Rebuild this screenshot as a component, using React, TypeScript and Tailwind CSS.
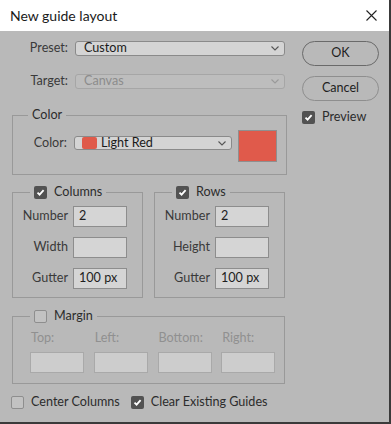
import React from "react";

const FONT = { fontFamily: 'Lato, "Noto Sans", sans-serif' };

function Check({ checked }: { checked: boolean }) {
  return checked ? (
    <span className="flex h-[13px] w-[13px] shrink-0 items-center justify-center rounded-[2px] bg-[#525252]">
      <svg width="9" height="9" viewBox="0 0 9 9">
        <path d="M1.5 4.6 L3.6 6.7 L7.6 2.2" fill="none" stroke="#ffffff" strokeWidth="1.8" />
      </svg>
    </span>
  ) : (
    <span className="block h-[13px] w-[13px] shrink-0 rounded-[2px] border border-[#8e8e8e] bg-[#c2c2c2]" />
  );
}

function Chevron({ color = "#555" }: { color?: string }) {
  return (
    <svg width="8" height="5" viewBox="0 0 8 5" className="shrink-0">
      <path d="M0.5 0.5 L4 4 L7.5 0.5" fill="none" stroke={color} strokeWidth="1.1" />
    </svg>
  );
}

function Input({ value, disabled }: { value?: string; disabled?: boolean }) {
  return (
    <div
      className={
        "flex h-[21px] w-[54px] items-center border px-[5px] text-[#1e1e1e] " +
        (disabled ? "border-[#a9a9a9] bg-[#cdcdcd]" : "border-[#8d8d8d] bg-[#d5d5d5]")
      }
    >
      {value}
    </div>
  );
}

function FieldRow({ label, value }: { label: string; value?: string }) {
  return (
    <div className="flex items-center">
      <span className="w-[60px] pr-[5px] text-right text-[#3a3a3a]">{label}</span>
      <Input value={value} />
    </div>
  );
}

export default function App() {
  return (
    <div className="h-[424px] w-[391px] bg-[#3a3a3a]" style={FONT}>
      <div className="flex h-[422px] w-[389px] flex-col overflow-hidden bg-[#b9b9b9] text-[12.6px] text-[#2c2c2c]">
        {/* title bar */}
        <div className="flex h-[31px] shrink-0 items-center justify-between bg-white pl-[10px] pr-[12px]">
          <span className="text-[14px] text-[#1a1a1a]">New guide layout</span>
          <svg width="11" height="11" viewBox="0 0 11 11">
            <path d="M0.5 0.5 L10.5 10.5 M10.5 0.5 L0.5 10.5" stroke="#222" strokeWidth="1.1" />
          </svg>
        </div>

        <div className="flex pl-[12px] pt-[10px]">
          {/* left column */}
          <div className="flex w-[274px] flex-col">
            <div className="flex h-[15px] items-center">
              <span className="w-[56px] text-right text-[#3a3a3a]">Preset:</span>
              <div className="ml-[7px] flex h-[15px] w-[210px] items-center justify-between rounded-[3px] border border-[#8a8a8a] bg-[#d4d4d4] pl-[8px] pr-[5px] text-[#1a1a1a]">
                <span>Custom</span>
                <Chevron />
              </div>
            </div>
            <div className="mt-[18px] flex h-[15px] items-center">
              <span className="w-[56px] text-right text-[#3a3a3a]">Target:</span>
              <div className="ml-[7px] flex h-[15px] w-[210px] items-center justify-between rounded-[3px] border border-[#a6a6a6] bg-[#bdbdbd] pl-[8px] pr-[5px] text-[#8c8c8c]">
                <span>Canvas</span>
                <Chevron color="#9a9a9a" />
              </div>
            </div>

            {/* Color group */}
            <fieldset className="mt-[18px] h-[68px] w-[275px] border border-[#999999]">
              <legend className="ml-[15px] px-[4px] leading-[16px]">Color</legend>
              <div className="flex items-start pt-[7px]">
                <div className="mt-[6px] flex h-[14px] items-center">
                  <span className="w-[54px] text-right text-[#3a3a3a]">Color:</span>
                  <div className="ml-[7px] flex h-[14px] w-[158px] items-center rounded-[3px] border border-[#8a8a8a] bg-[#d4d4d4] pr-[5px] text-[#1a1a1a]">
                    <span className="ml-[7px] h-[12px] w-[15px] rounded-[2px] bg-[#e05a4a]" />
                    <span className="ml-[4px] flex-1">Light Red</span>
                    <Chevron />
                  </div>
                </div>
                <div className="ml-[6px] h-[32px] w-[39px] border border-[#8f8f8f] bg-[#e05a4b]" />
              </div>
            </fieldset>

            {/* Columns / Rows */}
            <div className="mt-[9px] flex gap-[11px]">
              {(["Columns", "Rows"] as const).map((g) => (
                <fieldset key={g} className="h-[114px] w-[131px] border border-[#999999]">
                  <legend className="ml-[17px] px-[4px] leading-[16px]">
                    <span className="flex items-center gap-[7px]">
                      <Check checked />
                      <span>{g}</span>
                    </span>
                  </legend>
                  <div className="flex flex-col gap-[10px] pt-[6px]">
                    <FieldRow label="Number" value="2" />
                    <FieldRow label={g === "Columns" ? "Width" : "Height"} />
                    <FieldRow label="Gutter" value="100 px" />
                  </div>
                </fieldset>
              ))}
            </div>

            {/* Margin */}
            <fieldset className="mt-[10px] h-[76px] w-[273px] border border-[#999999]">
              <legend className="ml-[17px] px-[4px] leading-[16px]">
                <span className="flex items-center gap-[7px]">
                  <Check checked={false} />
                  <span>Margin</span>
                </span>
              </legend>
              <div className="grid grid-cols-4 gap-x-[10px] pl-[17px] pr-[9px] pt-[6px] text-[#909090]">
                {["Top:", "Left:", "Bottom:", "Right:"].map((l) => (
                  <div key={l} className="flex flex-col gap-[6px]">
                    <span className="pl-[1px] leading-[16px]">{l}</span>
                    <Input disabled />
                  </div>
                ))}
              </div>
            </fieldset>

            <div className="mt-[11px] flex h-[15px] items-center">
              <span className="-ml-[1px]">
                <Check checked={false} />
              </span>
              <span className="ml-[7px]">Center Columns</span>
              <span className="ml-[11px]">
                <Check checked />
              </span>
              <span className="ml-[7px]">Clear Existing Guides</span>
            </div>
          </div>

          {/* right column */}
          <div className="ml-[16px] flex w-[77px] flex-col">
            <div className="flex h-[25px] items-center justify-center rounded-full border border-[#6a6a6a] text-[#1e1e1e]">
              OK
            </div>
            <div className="mt-[10px] flex h-[25px] items-center justify-center rounded-full border border-[#8e8e8e] text-[#1e1e1e]">
              Cancel
            </div>
            <div className="mt-[10px] flex h-[13px] items-center">
              <Check checked />
              <span className="ml-[7px]">Preview</span>
            </div>
          </div>
        </div>
      </div>
    </div>
  );
}
